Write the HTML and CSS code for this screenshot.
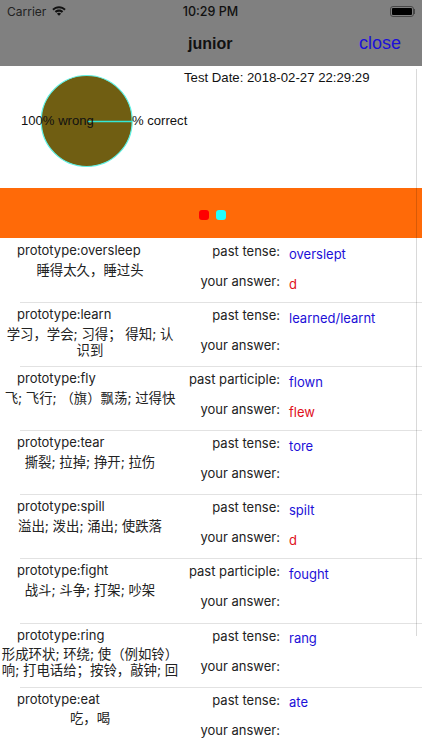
FILE: index.html
```html
<!DOCTYPE html>
<html lang="en">
<head>
    <meta charset="UTF-8">
    <meta name="viewport" content="width=device-width, initial-scale=1.0">
    <title>junior</title>
    <link rel="stylesheet" href="styles.css">
</head>
<body>
    <div class="screen">
        <div class="top-bar">
            <div class="status-bar">
                <div class="status-left">
                    <span>Carrier</span>
                    <svg class="wifi" viewBox="0 0 15 11" width="14" height="10">
                        <path d="M7.5 0.2C4.6 0.2 2 1.4 0.1 3.3L1.7 5C3.2 3.5 5.2 2.6 7.5 2.6s4.3 0.9 5.8 2.4l1.6-1.7C13 1.4 10.4 0.2 7.5 0.2z" fill="#111"/>
                        <path d="M7.5 3.9C5.6 3.9 4 4.6 2.8 5.9L4.4 7.5C5.2 6.7 6.3 6.2 7.5 6.2s2.3 0.5 3.1 1.3l1.6-1.6C11 4.6 9.4 3.9 7.5 3.9z" fill="#111"/>
                        <path d="M7.5 7.4C6.6 7.4 5.8 7.8 5.2 8.4L7.5 10.8l2.3-2.4C9.2 7.8 8.4 7.4 7.5 7.4z" fill="#111"/>
                    </svg>
                </div>
                <div class="status-time">10:29 PM</div>
                <div class="battery"><div class="battery-level"></div></div>
            </div>
            <div class="nav-bar">
                <div class="nav-title">junior</div>
                <div class="nav-close">close</div>
            </div>
        </div>

        <div class="chart-area">
            <svg class="pie" viewBox="0 0 200 122" width="200" height="122">
                <circle cx="86.7" cy="55" r="45.5" fill="#705e12" stroke="#5ff2e6" stroke-width="1.2"/>
                <line x1="87" y1="55.5" x2="132" y2="55.5" stroke="#33e8d8" stroke-width="1.5"/>
                <text x="21" y="59" class="pie-label">100% wrong</text>
                <text x="132" y="59" class="pie-label">% correct</text>
            </svg>
            <div class="test-date">Test Date: 2018-02-27 22:29:29</div>
        </div>

        <div class="legend">
            <span class="dot dot-red"></span>
            <span class="dot dot-cyan"></span>
        </div>

        <div class="list">
            <div class="row">
                <div class="word">
                    <div class="proto">prototype:oversleep</div>
                    <div class="meaning">睡得太久，睡过头</div>
                </div>
                <div class="answers">
                    <div class="answer-line"><span class="label">past tense:</span><span class="correct">overslept</span></div>
                    <div class="answer-line"><span class="label">your answer:</span><span class="wrong">d</span></div>
                </div>
            </div>
            <div class="row">
                <div class="word">
                    <div class="proto">prototype:learn</div>
                    <div class="meaning">学习，学会; 习得； 得知; 认识到</div>
                </div>
                <div class="answers">
                    <div class="answer-line"><span class="label">past tense:</span><span class="correct">learned/learnt</span></div>
                    <div class="answer-line"><span class="label">your answer:</span><span class="wrong"></span></div>
                </div>
            </div>
            <div class="row">
                <div class="word">
                    <div class="proto">prototype:fly</div>
                    <div class="meaning">飞; 飞行; （旗）飘荡; 过得快</div>
                </div>
                <div class="answers">
                    <div class="answer-line"><span class="label">past participle:</span><span class="correct">flown</span></div>
                    <div class="answer-line"><span class="label">your answer:</span><span class="wrong">flew</span></div>
                </div>
            </div>
            <div class="row">
                <div class="word">
                    <div class="proto">prototype:tear</div>
                    <div class="meaning">撕裂; 拉掉; 挣开; 拉伤</div>
                </div>
                <div class="answers">
                    <div class="answer-line"><span class="label">past tense:</span><span class="correct">tore</span></div>
                    <div class="answer-line"><span class="label">your answer:</span><span class="wrong"></span></div>
                </div>
            </div>
            <div class="row">
                <div class="word">
                    <div class="proto">prototype:spill</div>
                    <div class="meaning">溢出; 泼出; 涌出; 使跌落</div>
                </div>
                <div class="answers">
                    <div class="answer-line"><span class="label">past tense:</span><span class="correct">spilt</span></div>
                    <div class="answer-line"><span class="label">your answer:</span><span class="wrong">d</span></div>
                </div>
            </div>
            <div class="row">
                <div class="word">
                    <div class="proto">prototype:fight</div>
                    <div class="meaning">战斗; 斗争; 打架; 吵架</div>
                </div>
                <div class="answers">
                    <div class="answer-line"><span class="label">past participle:</span><span class="correct">fought</span></div>
                    <div class="answer-line"><span class="label">your answer:</span><span class="wrong"></span></div>
                </div>
            </div>
            <div class="row">
                <div class="word">
                    <div class="proto">prototype:ring</div>
                    <div class="meaning">形成环状; 环绕; 使（例如铃）响; 打电话给；按铃，敲钟; 回</div>
                </div>
                <div class="answers">
                    <div class="answer-line"><span class="label">past tense:</span><span class="correct">rang</span></div>
                    <div class="answer-line"><span class="label">your answer:</span><span class="wrong"></span></div>
                </div>
            </div>
            <div class="row">
                <div class="word">
                    <div class="proto">prototype:eat</div>
                    <div class="meaning">吃，喝</div>
                </div>
                <div class="answers">
                    <div class="answer-line"><span class="label">past tense:</span><span class="correct">ate</span></div>
                    <div class="answer-line"><span class="label">your answer:</span><span class="wrong"></span></div>
                </div>
            </div>
        </div>

        <div class="scroll-line"></div>
    </div>
</body>
</html>
```

FILE: styles.css
```css
* {
    box-sizing: border-box;
}

html,
body {
    margin: 0;
    padding: 0;
    background: #fff;
}

.screen {
    position: relative;
    width: 422px;
    height: 750px;
    overflow: hidden;
    font-family: Inter, "Noto Sans CJK SC", sans-serif;
    color: #222;
}

.top-bar {
    height: 66px;
    background-color: #808080;
    color: #111;
}

.status-bar {
    display: grid;
    grid-template-columns: 1fr auto 1fr;
    align-items: center;
    height: 21px;
    padding: 1px 8px 0 7px;
    font-size: 12px;
}

.status-left {
    display: flex;
    align-items: center;
    gap: 6px;
    color: #222;
}

.status-time {
    font-weight: 500;
    font-size: 12.5px;
}

.battery {
    justify-self: end;
    position: relative;
    width: 24px;
    height: 11px;
    border: 1px solid #484848;
    border-radius: 3px;
    padding: 1px;
}

.battery::after {
    content: "";
    position: absolute;
    left: 23px;
    top: 2px;
    width: 1px;
    height: 5px;
    background-color: #484848;
}

.battery-level {
    height: 100%;
    background-color: #000;
    border-radius: 1px;
}

.nav-bar {
    display: flex;
    align-items: center;
    justify-content: space-between;
    height: 45px;
    padding: 0 21px 0 188px;
}

.nav-title {
    font-family: "Liberation Sans", sans-serif;
    font-size: 16px;
    font-weight: bold;
}

.nav-close {
    font-family: "Liberation Sans", sans-serif;
    font-size: 18px;
    color: #1c10d8;
}

.chart-area {
    position: relative;
    height: 122px;
    background: #fff;
}

.pie {
    display: block;
}

.pie-label {
    font-family: "Liberation Sans", sans-serif;
    font-size: 13.1px;
    fill: #111;
}

.test-date {
    position: absolute;
    top: 4px;
    left: 184px;
    font-family: "Liberation Sans", sans-serif;
    font-size: 13.2px;
    color: #111;
}

.legend {
    display: flex;
    align-items: center;
    justify-content: center;
    gap: 6.5px;
    height: 50px;
    background-color: #ff6a08;
    padding: 4px 0 0 3px;
}

.dot {
    width: 10px;
    height: 10px;
    border-radius: 3px;
}

.dot-red {
    background-color: #ff0000;
}

.dot-cyan {
    background-color: #22ffff;
}

.row {
    display: flex;
    height: 64.1px;
    overflow: hidden;
    position: relative;
    font-size: 13px;
}

.row + .row::before {
    content: "";
    position: absolute;
    left: 20px;
    right: 0;
    top: 0;
    height: 1px;
    background-color: #e2e2e2;
}

.word {
    width: 180px;
    flex-shrink: 0;
    padding-top: 4px;
}

.proto {
    padding-left: 17px;
    line-height: 17px;
}

.meaning {
    margin-top: 2.5px;
    text-align: center;
    line-height: 16px;
    font-size: 13.4px;
    color: #222;
}

.answers {
    flex: 1;
    padding-top: 4px;
}

.answer-line {
    display: flex;
    align-items: flex-start;
    height: 30px;
}

.label {
    width: 100px;
    text-align: right;
    line-height: 18px;
    white-space: nowrap;
}

.correct,
.wrong {
    margin-left: 9px;
    line-height: 20px;
    padding-top: 1.5px;
}

.correct {
    color: #1c10d8;
}

.wrong {
    color: #e0101c;
}

.scroll-line {
    position: absolute;
    left: 416px;
    top: 69px;
    width: 1px;
    height: 567px;
    background-color: rgba(0, 0, 0, 0.15);
}
```
